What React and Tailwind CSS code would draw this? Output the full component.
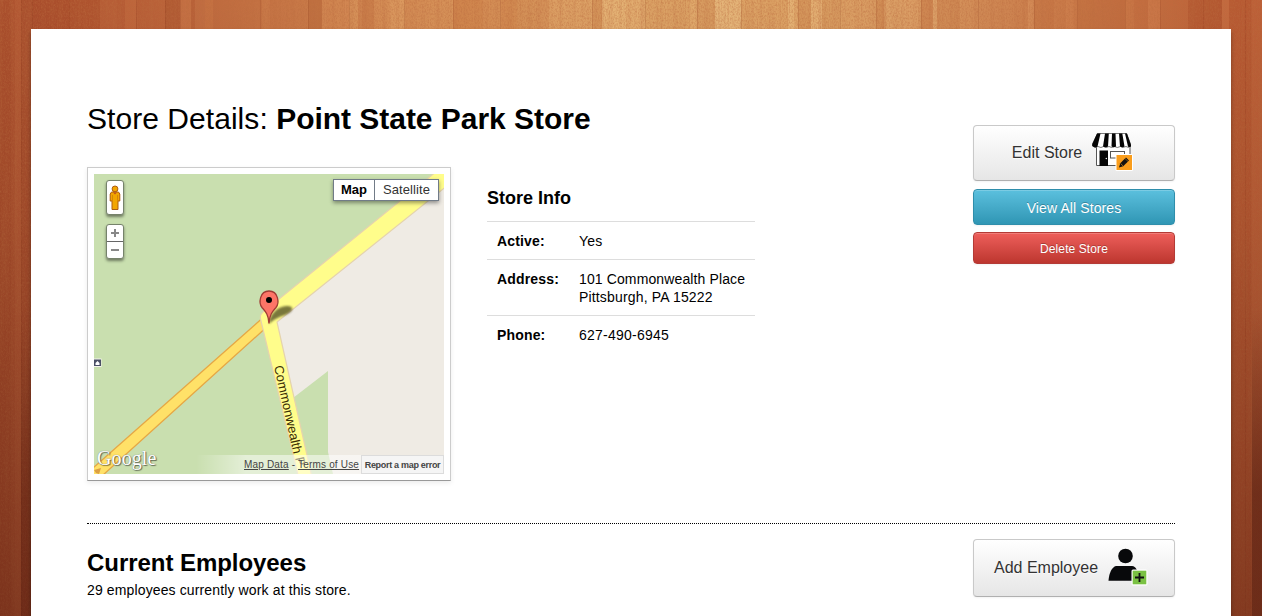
import React from 'react';

// [x, width, colour, opacity]
const planks = [
  [0, 11, '#7a2410', 0.08], [15, 6, '#e08a58', 0.1], [21, 12, '#7a2410', 0.1], [33, 36, '#8a2810', 0.16],
  [69, 31, '#8a2810', 0.12], [100, 17, '#ffb070', 0.03], [125, 11, '#ffb070', 0.1], [165, 15, '#7a2410', 0.14],
  [180, 11, '#ffc080', 0.12], [191, 4, '#7a2410', 0.08], [195, 10, '#ffc080', 0.06], [205, 8, '#ffb070', 0.1],
  [262, 8, '#ffc080', 0.08], [308, 14, '#8a3010', 0.14],
  [322, 27, '#ffc880', 0.1], [349, 9, '#ffd890', 0.16], [362, 12, '#a84018', 0.08], [374, 16, '#ffc880', 0.1],
  [390, 15, '#ffd890', 0.18], [453, 30, '#b04818', 0.18], [483, 18, '#b04818', 0.1], [501, 16, '#b04818', 0.18],
  [517, 32, '#b04818', 0.12], [592, 10, '#a84818', 0.16], [602, 24, '#ffe8a8', 0.18],
  [626, 19, '#ffe0a0', 0.08], [645, 45, '#a84818', 0.06], [691, 6, '#ffe0a0', 0.04], [697, 18, '#a84818', 0.12],
  [715, 26, '#fff0b8', 0.2], [741, 47, '#a84818', 0.05], [788, 6, '#ffe8a8', 0.18], [798, 13, '#a84818', 0.16],
  [811, 11, '#ffe8a8', 0.16], [822, 18, '#a84818', 0.08], [876, 8, '#a84818', 0.14], [886, 35, '#ffe0a0', 0.12],
  [921, 12, '#a84018', 0.14], [933, 4, '#ffe0a0', 0.2], [937, 23, '#a84018', 0.06], [960, 14, '#ffd090', 0.06],
  [1028, 6, '#ffd090', 0.14], [1034, 20, '#983010', 0.08], [1066, 8, '#ffc080', 0.08],
  [1078, 47, '#902c0c', 0.06], [1125, 9, '#ffc080', 0.08], [1148, 12, '#ffc080', 0.14],
  [1188, 34, '#801c04', 0.14], [1222, 7, '#ffb070', 0.12], [1229, 22, '#a03414', 0.1], [1252, 10, '#ffb070', 0.06],
];

const seams = [21, 32, 69, 136, 165, 180, 260, 308, 349, 404, 453, 500, 592, 645, 697, 741, 798, 840, 876, 921, 978, 1034, 1077, 1125, 1160, 1203, 1245];

function WoodBackdrop() {
  return (
    <svg className="absolute inset-0 -z-10 h-full w-full" viewBox="0 0 1262 616" preserveAspectRatio="none" aria-hidden="true">
      <defs>
        <linearGradient id="wood">
          <stop offset="0" stopColor="#ad522f" />
          <stop offset=".1" stopColor="#b65c35" />
          <stop offset=".22" stopColor="#c67545" />
          <stop offset=".35" stopColor="#d69158" />
          <stop offset=".5" stopColor="#dfa86b" />
          <stop offset=".64" stopColor="#dea669" />
          <stop offset=".75" stopColor="#d3905a" />
          <stop offset=".87" stopColor="#c77444" />
          <stop offset="1" stopColor="#b85b34" />
        </linearGradient>
        <linearGradient id="dusk" x1="0" y1="0" x2="0" y2="1">
          <stop offset="0" stopColor="#3c0c06" stopOpacity="0" />
          <stop offset=".35" stopColor="#3c0c06" stopOpacity=".1" />
          <stop offset="1" stopColor="#3c0c06" stopOpacity=".42" />
        </linearGradient>
        <linearGradient id="edge" x1="0" y1="0" x2="0" y2="1">
          <stop offset=".5" stopColor="#3c0c06" stopOpacity="0" />
          <stop offset=".8" stopColor="#3c0c06" stopOpacity=".4" />
          <stop offset="1" stopColor="#3c0c06" stopOpacity=".35" />
        </linearGradient>
        <filter id="grain" x="0" y="0" width="100%" height="100%">
          <feTurbulence type="fractalNoise" baseFrequency=".75 .45" numOctaves="3" seed="6" />
          <feColorMatrix values="0 0 0 0 .5  0 0 0 0 .15  0 0 0 0 .05  1.5 0 0 0 -.58" />
        </filter>
        <filter id="streaks" x="0" y="0" width="100%" height="100%">
          <feTurbulence type="fractalNoise" baseFrequency=".22 .006" numOctaves="3" seed="11" />
          <feColorMatrix values="0 0 0 0 .5  0 0 0 0 .15  0 0 0 0 .05  2 0 0 0 -.9" />
        </filter>
      </defs>
      <rect width="1262" height="616" fill="url(#wood)" />
      {planks.map(([x, w, c, o]) => (
        <rect key={x} x={x} width={w} height="616" fill={c} opacity={o} />
      ))}
      {seams.map((x) => (
        <rect key={x} x={x} width="1" height="616" fill="#7a2c10" opacity=".16" />
      ))}
      <rect width="1262" height="616" filter="url(#grain)" opacity=".65" />
      <rect width="1262" height="616" filter="url(#streaks)" opacity=".3" />
      <rect width="1262" height="616" fill="url(#dusk)" />
      <rect x="1252" width="10" height="616" fill="url(#edge)" />
      <rect x="21" width="10" height="616" fill="url(#edge)" opacity=".6" />
    </svg>
  );
}

function MapDrawing() {
  return (
    <svg className="block h-[300px] w-[350px]" viewBox="94 174 350 300">
      <defs>
        <filter id="soft" x="-30%" y="-50%" width="160%" height="200%">
          <feGaussianBlur stdDeviation="1.1" />
        </filter>
      </defs>
      <rect x="94" y="174" width="350" height="300" fill="#c9dfaf" />
      <path d="M444 182 L276 320 L311 474 H444 Z" fill="#efebe4" />
      <path d="M293 398 L328 371 V452 L333 474 H308 Z" fill="#c9dfaf" />
      <path d="M262 318.500 L92 469 V480 H97.500 L264 329.500 Z" fill="#ffe168" stroke="#e5a745" strokeWidth="1.300" />
      <path d="M94 470 L101 468 L99 474 L96 473 Z" fill="#dca044" />
      <path d="M434.500 173 L263 312 Q259 315 261 321 L298 475 H311.500 L277 322 L445 187.500 V173 Z" fill="#fffd8b" stroke="#e5d3ad" strokeWidth="1.200" />
      <g>
        <rect x="93" y="358.500" width="8.500" height="8.500" fill="#f4f4ec" />
        <path d="M94 359.500H101V366H94Z" fill="#4b5066" />
        <path d="M95.500 365V363L97.500 361L99.500 363V365Z" fill="#fff" />
      </g>
      <path d="M269 324 C269 316 276 307 286 306 C294 305.500 295 311 285 315 C279 317 274 319 269 324Z" fill="#3a3816" opacity=".68" filter="url(#soft)" />
      <path d="M269 323.500 C268.500 314 265 311 262 307.500 C258.500 303 259.500 291 269 291 C278.500 291 279.500 303 276 307.500 C273 311 269.500 314 269 323.500Z" fill="#fd7567" stroke="#a03c34" strokeWidth="1.300" />
      <circle cx="269" cy="300" r="3" fill="#000" />
      <text transform="translate(274 366.500) rotate(77.500)" fontFamily="Liberation Sans, Arial, sans-serif" fontSize="13" fill="#3a2c04" textLength="90">Commonwealth</text>
      <text transform="translate(295 458) rotate(77.500)" fontFamily="Liberation Sans, Arial, sans-serif" fontSize="13" fill="#4a3a08">P</text>
    </svg>
  );
}

function Pegman() {
  return (
    <svg className="h-[26px] w-[12px]" viewBox="0 0 12 26">
      <path d="M2.500 7H9.500L10.800 9V16H9V24.500H3V16H1.200V9Z" fill="#f2a600" stroke="#ad5c11" />
      <path d="M3.500 10V16M8.500 10V16" stroke="#c87a0c" strokeWidth=".7" />
      <circle cx="6" cy="3.900" r="2.900" fill="#f2a600" stroke="#ad5c11" />
      <path d="M4 7.500H8L6 9.500Z" fill="#c1501c" />
    </svg>
  );
}

function StoreIcon() {
  return (
    <svg className="h-[38px] w-[41px] shrink-0" viewBox="0 0 41 38">
      <path d="M4.500 14V32.500H38V14" fill="#fff" stroke="#555" />
      <rect x="7.500" y="17.500" width="8.500" height="15.500" fill="#050505" />
      <circle cx="14.300" cy="25.500" r=".7" fill="#fff" />
      <rect x="18.500" y="18.500" width="14" height="6.500" fill="#fff" stroke="#555" />
      <path d="M5.500 .5H34.500L38.500 11V13Q36.500 15.500 34 13.500Q30 15.500 28.500 13.500Q25 15.500 22.500 13.500Q19.500 15.500 17 13.500Q14 15.500 11.500 13.500Q9 15.500 6 13.500Q3 15.500 .5 13V11Z" fill="#fff" stroke="#555" strokeWidth=".8" />
      <path d="M5 .5H8.500L5.500 13.500Q3 15.500 .3 13V11ZM13 .5H16.800L16 13.500Q13.500 15 11 13.500ZM20 .5H23.500L24 13.500Q22 14.800 19.500 13.500ZM27 .5H30.300L32.500 13.500Q30.500 14.800 28 13.500ZM33 .5H35L39 12V13.500Q37.500 14.500 36 13.500Z" fill="#050505" />
      <rect x="23.500" y="21" width="17.500" height="17" rx="1.500" fill="#fff" />
      <rect x="24.500" y="22" width="15.500" height="15" fill="#f99d1c" />
      <path d="M27 34.500L28.300 30.300L34 24.600L37 27.400L31.200 33.200Z" fill="#111" />
      <path d="M28.600 30.500L31 32.900" stroke="#f99d1c" strokeWidth=".6" />
      <path d="M33 25.500L36 28.400" stroke="#f99d1c" strokeWidth=".5" />
    </svg>
  );
}

function EmployeeIcon() {
  return (
    <svg className="h-[38px] w-[40px] shrink-0" viewBox="0 0 40 38">
      <circle cx="17.500" cy="8" r="7.300" fill="#08090b" />
      <path d="M.5 32.800C1 25 4 19 8 18H24C28 18.500 30 22 31 32.800Z" fill="#08090b" />
      <rect x="23.500" y="21.500" width="16" height="16" rx="1.500" fill="#fff" />
      <rect x="24.700" y="22.700" width="13.600" height="13.600" fill="#7ac143" />
      <path d="M31.500 25V34M27 29.500H36" stroke="#111" strokeWidth="1.800" />
    </svg>
  );
}

function Row({ label, children }) {
  return (
    <div className="flex border-t border-[#ddd] px-[10px] pt-[10px] pb-[9px] text-[14px] leading-[18px]">
      <dt className="w-[82px] shrink-0 font-bold tracking-[.16px]">{label}</dt>
      <dd className="whitespace-nowrap">{children}</dd>
    </div>
  );
}

const greyButton = 'flex w-[202px] justify-center rounded-[4px] border border-[#c9c9c9] border-b-[#b0b0b0] bg-gradient-to-b from-white to-[#e6e6e6] text-[16px] text-[#333] shadow-[inset_0_1px_0_rgba(255,255,255,.2),0_1px_2px_rgba(0,0,0,.05)] [text-shadow:0_1px_1px_rgba(255,255,255,.75)]';

function StoreMap() {
  return (
    <div className="h-[314px] w-[364px] shrink-0 border border-[#ccc] border-b-[#999] bg-white p-[6px] shadow-[0_2px_5px_rgba(0,0,0,.08)]">
      <div className="relative h-[300px] w-[350px] overflow-hidden">
        <MapDrawing />
        <div className="absolute top-[6px] left-[12px] flex h-[35px] w-[18px] items-center justify-center rounded-[3px] border border-[#76836b] bg-white shadow-[0_2px_3px_rgba(0,0,0,.45)]">
          <Pegman />
        </div>
        <div className="absolute top-[50px] left-[12px] flex h-[35px] w-[18px] flex-col rounded-[3px] border border-[#76836b] bg-white shadow-[0_2px_3px_rgba(0,0,0,.45)]">
          <button className="flex flex-1 items-center justify-center border-b border-[#666]" aria-label="Zoom in">
            <svg className="h-2 w-2" viewBox="0 0 8 8"><path d="M4 0V8M0 4H8" stroke="#888" strokeWidth="2" /></svg>
          </button>
          <button className="flex flex-1 items-center justify-center" aria-label="Zoom out">
            <svg className="h-2 w-2" viewBox="0 0 8 8"><path d="M0 4H8" stroke="#888" strokeWidth="2" /></svg>
          </button>
        </div>
        <div className="absolute top-[5px] right-[5px] flex h-[22px] w-[106px] border border-[#717b87] bg-white text-[13px] leading-[20px] shadow-[0_2px_4px_rgba(0,0,0,.4)]">
          <button className="flex w-[41px] justify-center border-r border-[#717b87] font-bold text-black">Map</button>
          <button className="flex flex-1 justify-center tracking-[.1px] text-[#333]">Satellite</button>
        </div>
        <div className="absolute bottom-[2px] left-[3px] font-['Liberation_Serif',serif] text-[20px] leading-[28px] tracking-[.1px] text-white [text-shadow:1px_1px_1px_rgba(0,0,0,.5),0_0_1px_#777]">Google</div>
        <div className="absolute right-0 bottom-0 flex h-[19px] w-[248px] items-stretch justify-end bg-[linear-gradient(to_right,rgba(255,255,255,0),rgba(255,255,255,.5)_50px)] text-[10px] leading-[19px] whitespace-nowrap text-[#444]">
          <div className="mr-[2px] w-[115px] tracking-[.18px]"><span className="underline">Map Data</span> - <span className="underline">Terms of Use</span></div>
          <div className="flex w-[83px] justify-center border border-[#dcdcdc] bg-[#f5f5f5] text-[9px] leading-[18px] font-bold tracking-[-.3px]">Report a map error</div>
        </div>
      </div>
    </div>
  );
}

export default function App() {
  return (
    <div className="relative isolate flex h-[616px] justify-center overflow-hidden pt-[29px] font-['Liberation_Sans',Arial,sans-serif] text-black">
      <WoodBackdrop />
      <main className="h-[620px] w-[1200px] shrink-0 bg-white px-[56px] pt-[70px] shadow-[0_3px_4px_rgba(0,0,0,.35)]">
        <section className="flex h-[424px] justify-between">
          <div>
            <h1 className="text-[30px] leading-[40px]"><span className="tracking-[.05px]">Store Details: </span><b className="tracking-[-.03px]">Point State Park Store</b></h1>
            <div className="mt-[28px] flex gap-[36px]">
              <StoreMap />
              <div className="w-[268px] pt-[18px]">
                <h2 className="h-[36px] text-[18px] leading-[26px] font-bold">Store Info</h2>
                <dl>
                  <Row label="Active:"><span className="tracking-[.2px]">Yes</span></Row>
                  <Row label="Address:"><span className="tracking-[.12px]">101 Commonwealth Place</span><br /><span className="tracking-[.16px]">Pittsburgh, PA 15222</span></Row>
                  <Row label="Phone:"><span className="tracking-[.24px]">627-490-6945</span></Row>
                </dl>
              </div>
            </div>
          </div>
          <div className="flex flex-col pt-[26px]">
            <button className={greyButton + ' h-[56px] gap-[10px] pt-[7px] pr-[3px]'}>
              <span className="leading-[40px]">Edit Store</span>
              <StoreIcon />
            </button>
            <button className="mt-2 h-[36px] rounded-[4px] border border-[#2f8eab] bg-gradient-to-b from-[#5bc0de] to-[#2f96b4] pt-[2px] text-[14px] tracking-[.1px] text-white shadow-[inset_0_1px_0_rgba(255,255,255,.2),0_1px_2px_rgba(0,0,0,.05)] [text-shadow:0_-1px_0_rgba(0,0,0,.25)]">View All Stores</button>
            <button className="mt-[7px] h-[32px] rounded-[4px] border border-[#b43b36] bg-gradient-to-b from-[#ee5f5b] to-[#bd362f] pt-[2px] text-[12px] tracking-[.1px] text-white shadow-[inset_0_1px_0_rgba(255,255,255,.2),0_1px_2px_rgba(0,0,0,.05)] [text-shadow:0_-1px_0_rgba(0,0,0,.25)]">Delete Store</button>
          </div>
        </section>
        <section className="flex justify-between border-t border-dotted border-black pt-[15px]">
          <div className="pt-[9px]">
            <h2 className="text-[24px] leading-[30px] font-bold tracking-[-.05px]">Current Employees</h2>
            <p className="mt-[3px] text-[14px] leading-[18px] tracking-[.13px]">29 employees currently work at this store.</p>
          </div>
          <button className={greyButton + ' h-[58px] gap-[10px] pt-[8px] pr-[6px]'}>
            <span className="leading-[40px]">Add Employee</span>
            <EmployeeIcon />
          </button>
        </section>
      </main>
    </div>
  );
}
